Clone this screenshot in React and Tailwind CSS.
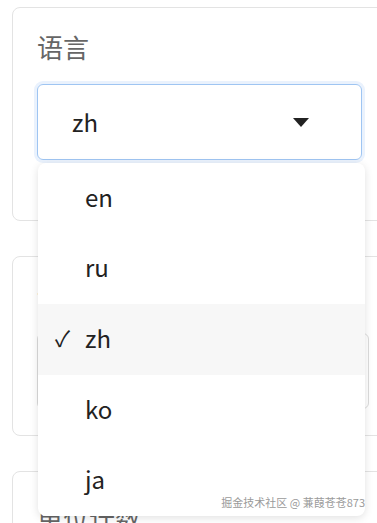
const OPTIONS = ["en", "ru", "zh", "ko", "ja"]

const Card = ({ label, children, className = "" }) => (
  <div className={"w-[420px] rounded-lg border border-[#e3e3e3] bg-white pl-[24px] " + className}>
    <div className="text-[26px] leading-[36px] text-[#666]">{label}</div>
    {children}
  </div>
)

export default function App() {
  const value = "zh"

  return (
    <div
      className="relative h-[523px] w-[377px] overflow-hidden bg-white"
      style={{ fontFamily: '"Noto Sans CJK SC", "Noto Sans", sans-serif' }}
    >
      <div className="flex flex-col gap-[35px] pl-[12px] pt-[7px]">
        {/* language */}
        <Card label="语言" className="pb-[60px] pt-[21px]">
          <div className="mt-[19px] flex h-[76px] w-[325px] items-center justify-between rounded-md border border-[#9fc5f2] pl-[34px] pr-[52px] shadow-[0_0_0_3px_#eaf2fd]">
            <span className="text-[24px] text-[#222]">{value}</span>
            <svg width="16" height="9" viewBox="0 0 16 9">
              <path d="M0 0h16L8 9z" fill="#222" />
            </svg>
          </div>
        </Card>

        {/* second section, mostly hidden */}
        <Card label="语音" className="pb-[26px] pt-[21px]">
          <div className="mt-[19px] flex h-[76px] w-[332px] items-center rounded-md border border-[#dcdcdc] pl-[34px]">
            <span className="text-[24px] text-[#222]">默认</span>
          </div>
        </Card>

        <Card label="单位计数" className="pb-[40px] pt-[28px]">
          <div className="h-[76px]" />
        </Card>
      </div>

      {/* open select menu */}
      <ul className="absolute left-[38px] top-[163px] w-[327px] overflow-hidden rounded-lg bg-white shadow-[0_2px_8px_rgba(0,0,0,0.12)]">
        {OPTIONS.map((o) => (
          <li
            key={o}
            className={
              "relative flex h-[70.6px] items-center pl-[47px] pb-[3px] text-[24px] text-[#222] " +
              (o === value ? "bg-[#f7f7f7]" : "")
            }
          >
            {o === value && <span className="absolute left-[17px] text-[22px]">✓</span>}
            {o}
          </li>
        ))}
      </ul>

      {/* watermark */}
      <div className="absolute right-[12px] top-[494px] text-[11px] text-[#9a9a9a] [text-shadow:0_0_2px_#fff]">
        掘金技术社区 @ 蒹葭苍苍873
      </div>
    </div>
  )
}
